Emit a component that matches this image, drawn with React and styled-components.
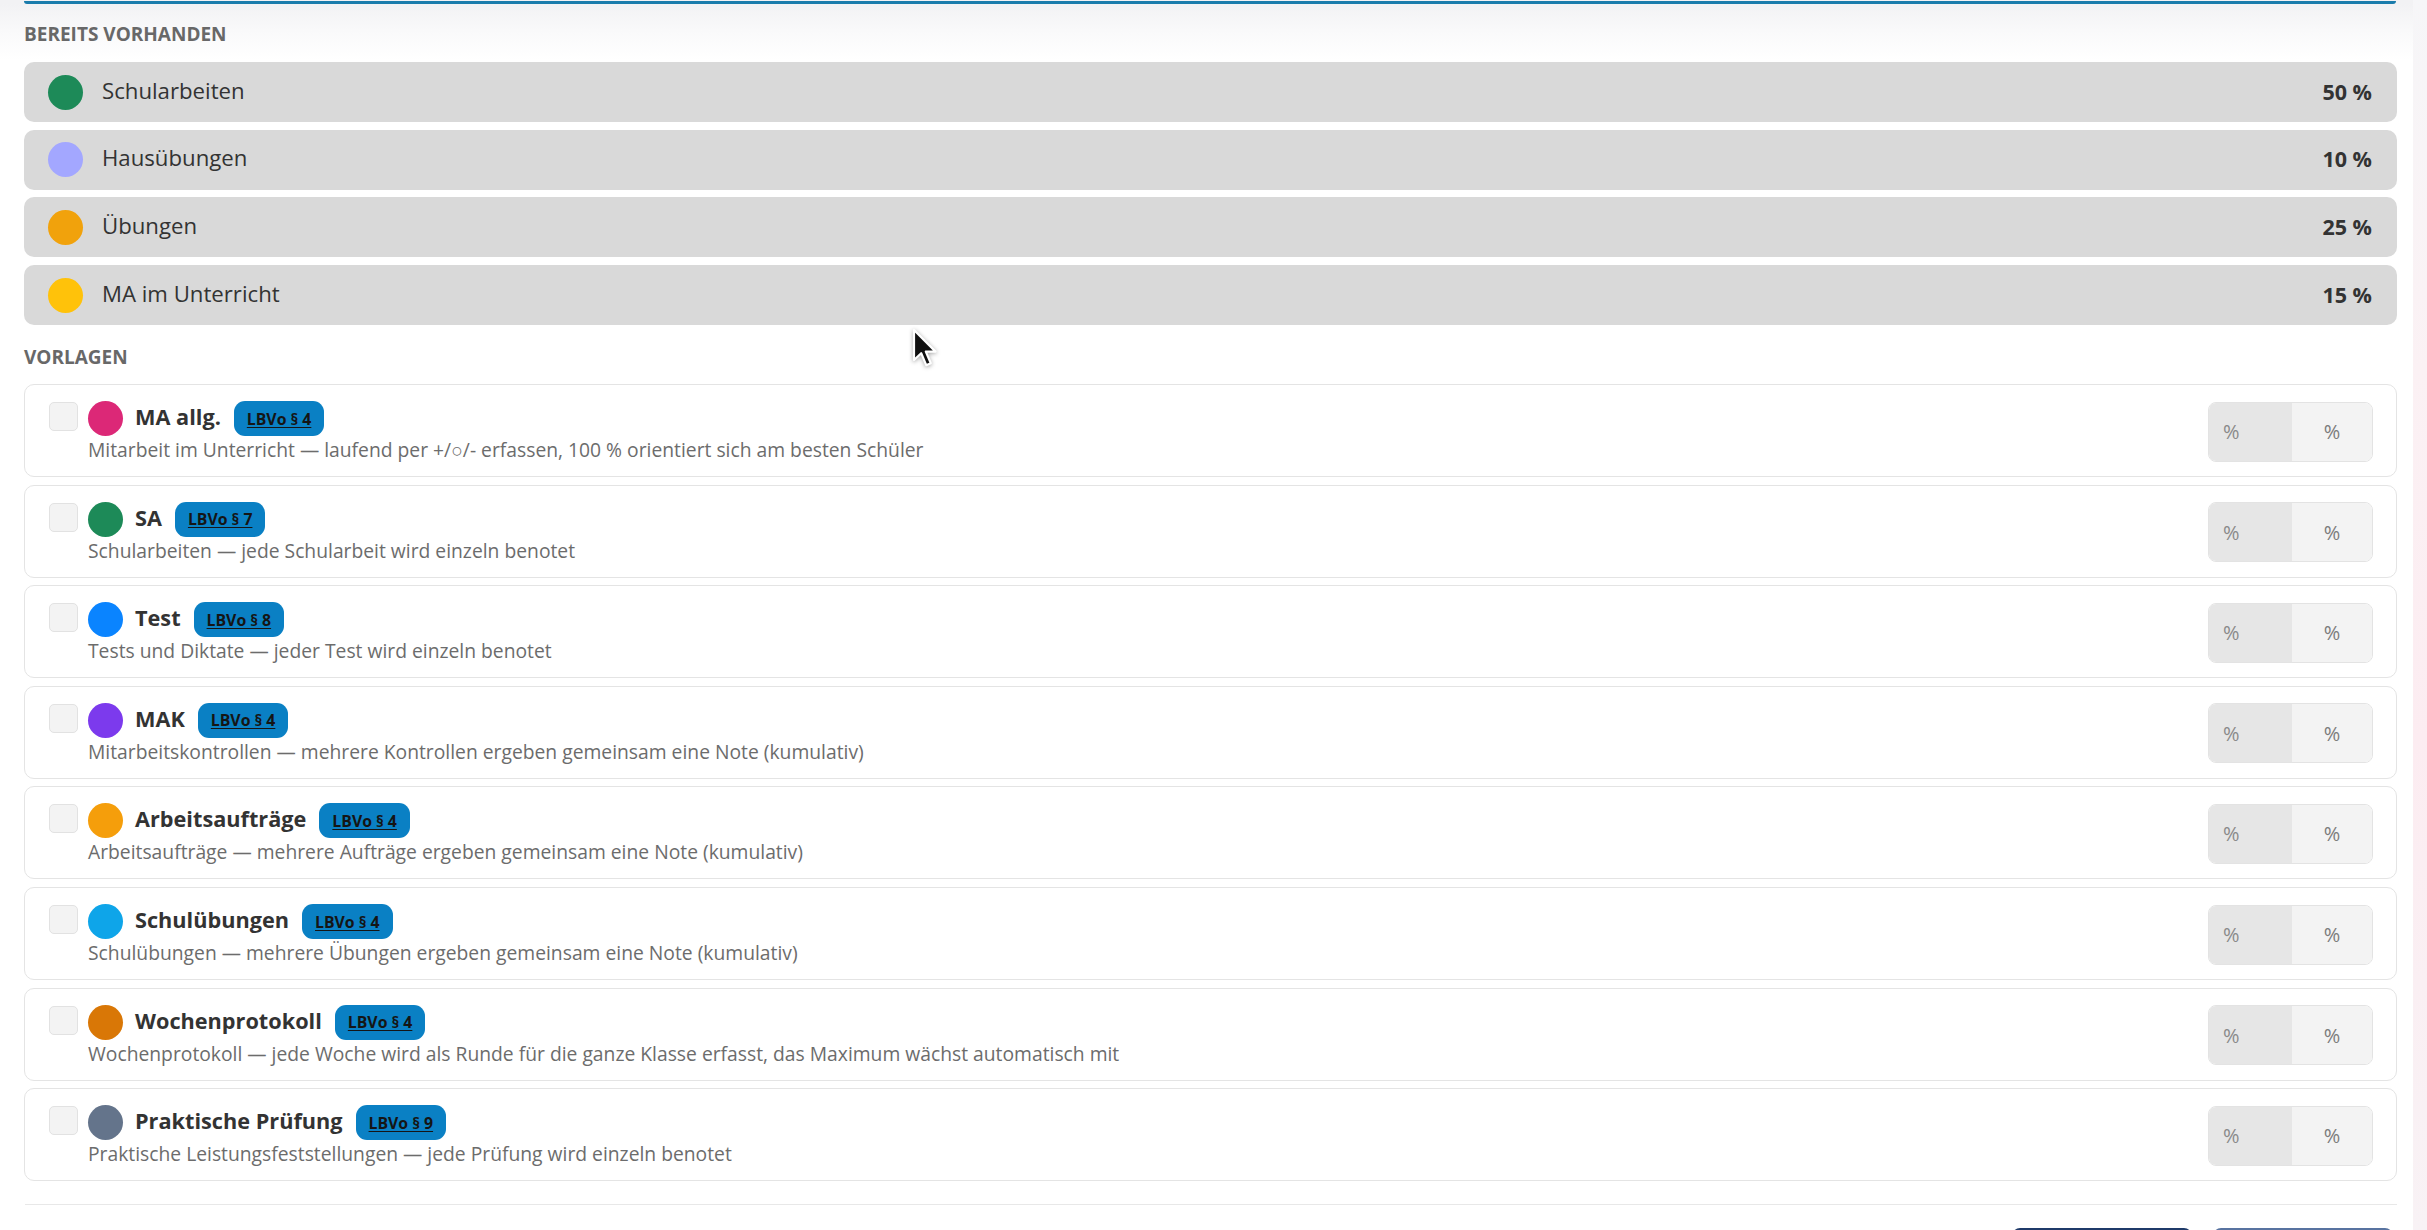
import * as React from 'react';
import styled, { createGlobalStyle } from 'styled-components';

const GlobalStyle = createGlobalStyle`
    html, body {
        margin: 0;
        padding: 0;
        background: #fff;
    }
    body {
        font-family: "Open Sans", "Liberation Sans", sans-serif;
        color: #333;
    }
    * {
        box-sizing: border-box;
    }
`;

const Screen = styled.div`
    display: flex;
    height: 100vh;
    overflow: hidden;
    position: relative;
`;

const ModalBody = styled.div`
    flex: 1;
    padding: 0 16px 0 24px;
    background: linear-gradient(180deg, #f2f2f4 4px, #f9f9fa 30px, #ffffff 60px);
`;

const Backdrop = styled.div`
    width: 14px;
    background: linear-gradient(180deg, #f6f6f8 0, #fbf1f4 30%, #fcecf1 60%, #f8f2f5 100%);
`;

const TabLine = styled.div`
    margin-top: 1px;
    margin-right: 1px;
    height: 3px;
    background: #1a7cac;
    border-radius: 0 0 3px 3px;
`;

const SectionTitle = styled.h6`
    margin: ${p => p.$top}px 0 ${p => p.$bottom}px;
    font-size: 19px;
    line-height: 22px;
    font-weight: 700;
    text-transform: uppercase;
    color: #686868;
`;

const ExistingList = styled.div`
    display: flex;
    flex-direction: column;
    gap: 7.7px;
`;

const ExistingRow = styled.div`
    display: flex;
    align-items: center;
    height: 60px;
    padding: 0 25px 0 24px;
    background: #d9d9d9;
    border-radius: 10px;
`;

const Dot = styled.span`
    flex: none;
    width: 35px;
    height: 35px;
    border-radius: 50%;
    background: ${p => p.$color};
`;

const RowLabel = styled.span`
    flex: 1;
    margin: 0 0 4px 19px;
    font-size: 22.2px;
    color: #333;
`;

const RowValue = styled.span`
    margin-bottom: 2px;
    font-size: 21.5px;
    font-weight: 700;
    color: #333;
`;

const TemplateList = styled.div`
    display: flex;
    flex-direction: column;
    gap: 7.6px;
`;

const TemplateCard = styled.label`
    display: flex;
    align-items: flex-start;
    padding: 16px 23px 12px 24px;
    border: 1px solid #e4e4e4;
    border-radius: 10px;
    background: #fff;
`;

const Check = styled.span`
    flex: none;
    width: 29px;
    height: 29px;
    margin-top: 1px;
    margin-right: 10px;
    border: 1px solid #e2e2e2;
    border-radius: 5px;
    background: #f3f3f3;
`;

const CardMain = styled.div`
    flex: 1;
    display: flex;
    flex-direction: column;
`;

const TitleRow = styled.div`
    display: flex;
    align-items: center;
    height: 35px;
`;

const CardTitle = styled.span`
    margin: 0 13px 4px 12px;
    font-size: 21.7px;
    font-weight: 700;
    color: #333;
`;

const Badge = styled.a`
    display: inline-flex;
    align-items: center;
    height: 35px;
    padding: 0 13px;
    border-radius: 11px;
    background: #0a80c4;
    color: #151515;
    font-size: 15.8px;
    font-weight: 700;
    text-decoration: underline;
    text-underline-offset: 2px;
`;

const Description = styled.div`
    font-size: 19.3px;
    line-height: 28px;
    color: #6c6c6c;
`;

const PercentGroup = styled.div`
    flex: none;
    align-self: center;
    display: flex;
    width: 165px;
    height: 60px;
    margin-top: -2px;
    border: 1px solid #e3e3e3;
    border-radius: 8px;
    overflow: hidden;
`;

const PercentInput = styled.input`
    width: 83px;
    border: 0;
    padding: 0 0 0 14px;
    background: #e6e6e6;
    font-family: inherit;
    font-size: 20px;
    color: #555;
    outline: none;
    &::placeholder {
        color: #8a8a8a;
    }
`;

const PercentUnit = styled.span`
    flex: 1;
    display: flex;
    align-items: center;
    justify-content: center;
    background: #f3f3f3;
    font-size: 20px;
    color: #7c7c7c;
`;

const Divider = styled.hr`
    margin: 23px 0 23px 1px;
    border: 0;
    border-top: 1px solid #e8e8e8;
`;

const Footer = styled.div`
    display: flex;
    justify-content: flex-end;
    gap: 21px;
    padding-right: 4px;
`;

const FooterButton = styled.button`
    width: 180px;
    height: 52px;
    border-radius: 8px;
    border: 2px solid ${p => (p.$primary ? '#1f3a69' : '#5873a0')};
    background: ${p => (p.$primary ? '#27467d' : '#fff')};
`;

const Cursor = styled.svg`
    position: absolute;
    left: 912px;
    top: 328px;
    width: 26px;
    height: 40px;
    pointer-events: none;
    filter: drop-shadow(0 1px 2px rgba(0, 0, 0, 0.35));
`;

const existing = [
    { name: 'Schularbeiten', color: '#1d8a58', value: '50 %' },
    { name: 'Hausübungen', color: '#a3a7ff', value: '10 %' },
    { name: 'Übungen', color: '#f1a20c', value: '25 %' },
    { name: 'MA im Unterricht', color: '#ffc20a', value: '15 %' },
];

const templates = [
    { name: 'MA allg.', color: '#dc2877', law: 'LBVo § 4', text: 'Mitarbeit im Unterricht — laufend per +/○/- erfassen, 100 % orientiert sich am besten Schüler' },
    { name: 'SA', color: '#1d8a58', law: 'LBVo § 7', text: 'Schularbeiten — jede Schularbeit wird einzeln benotet' },
    { name: 'Test', color: '#0a84ff', law: 'LBVo § 8', text: 'Tests und Diktate — jeder Test wird einzeln benotet' },
    { name: 'MAK', color: '#7c3aed', law: 'LBVo § 4', text: 'Mitarbeitskontrollen — mehrere Kontrollen ergeben gemeinsam eine Note (kumulativ)' },
    { name: 'Arbeitsaufträge', color: '#f59e0b', law: 'LBVo § 4', text: 'Arbeitsaufträge — mehrere Aufträge ergeben gemeinsam eine Note (kumulativ)' },
    { name: 'Schulübungen', color: '#0ea5e9', law: 'LBVo § 4', text: 'Schulübungen — mehrere Übungen ergeben gemeinsam eine Note (kumulativ)' },
    { name: 'Wochenprotokoll', color: '#d97706', law: 'LBVo § 4', text: 'Wochenprotokoll — jede Woche wird als Runde für die ganze Klasse erfasst, das Maximum wächst automatisch mit' },
    { name: 'Praktische Prüfung', color: '#64748b', law: 'LBVo § 9', text: 'Praktische Leistungsfeststellungen — jede Prüfung wird einzeln benotet' },
];

export default function App() {
    return (
        <Screen>
            <GlobalStyle />
            <ModalBody>
                <TabLine />

                <SectionTitle $top={19} $bottom={17}>Bereits vorhanden</SectionTitle>
                <ExistingList>
                    {existing.map(item => (
                        <ExistingRow key={item.name}>
                            <Dot $color={item.color} />
                            <RowLabel>{item.name}</RowLabel>
                            <RowValue>{item.value}</RowValue>
                        </ExistingRow>
                    ))}
                </ExistingList>

                <SectionTitle $top={21} $bottom={16}>Vorlagen</SectionTitle>
                <TemplateList>
                    {templates.map(t => (
                        <TemplateCard key={t.name}>
                            <Check />
                            <CardMain>
                                <TitleRow>
                                    <Dot $color={t.color} />
                                    <CardTitle>{t.name}</CardTitle>
                                    <Badge href="#">{t.law}</Badge>
                                </TitleRow>
                                <Description>{t.text}</Description>
                            </CardMain>
                            <PercentGroup>
                                <PercentInput placeholder="%" disabled />
                                <PercentUnit>%</PercentUnit>
                            </PercentGroup>
                        </TemplateCard>
                    ))}
                </TemplateList>

                <Divider />
                <Footer>
                    <FooterButton $primary aria-label="Übernehmen" />
                    <FooterButton aria-label="Abbrechen" />
                </Footer>
            </ModalBody>
            <Backdrop />

            <Cursor viewBox="0 0 13 20">
                <path d="M1 1 L1 16 L4.6 12.6 L7.1 18.6 L9.4 17.6 L6.9 11.8 L11.8 11.8 Z" fill="#111" stroke="#fff" strokeWidth="1.1" strokeLinejoin="round" />
            </Cursor>
        </Screen>
    );
}
